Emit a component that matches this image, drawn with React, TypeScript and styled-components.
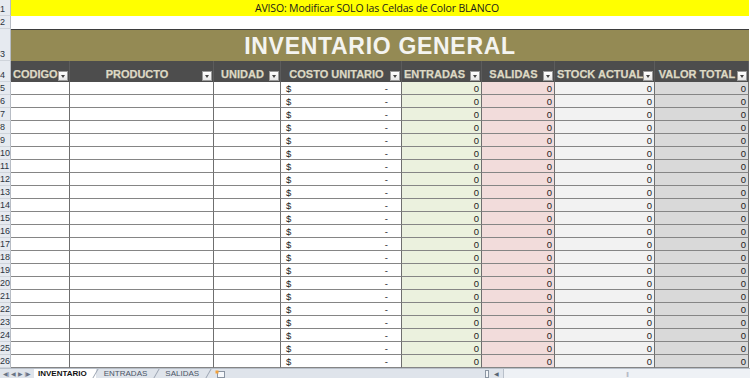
import React from 'react';
import styled, { createGlobalStyle } from 'styled-components';

const GlobalStyle = createGlobalStyle`
  html, body {
    margin: 0;
    padding: 0;
    background: #ffffff;
    overflow: hidden;
  }
  * {
    box-sizing: border-box;
  }
`;

const Page = styled.div`
  width: 750px;
  height: 378px;
  display: flex;
  flex-direction: column;
  font-family: 'Liberation Sans', Arial, sans-serif;
  background: #ffffff;
  overflow: hidden;
`;

const Sheet = styled.div`
  display: grid;
  grid-template-columns: 11px 59px 144px 67px 121px 80px 73px 100px 94px;
  grid-template-rows: 16px 13px 32px 21px repeat(22, 13px);
  flex: none;
`;

const RowNum = styled.div`
  background: #e6eaf0;
  border-right: 1px solid #b7bcc4;
  border-bottom: 1px solid #cfd4db;
  color: #2c3440;
  font-size: 9px;
  line-height: 1;
  display: flex;
  align-items: flex-end;
  justify-content: flex-end;
  padding: 0 1px 1px 0;
  overflow: hidden;
  white-space: nowrap;
  direction: rtl;
`;

const Notice = styled.div`
  grid-column: 2 / -1;
  background: #ffff00;
  color: #1a1a1a;
  font-family: 'Open Sans', 'Liberation Sans', sans-serif;
  font-size: 10.5px;
  display: flex;
  align-items: center;
  justify-content: center;
  letter-spacing: -0.15px;
  padding-right: 6px;
`;

const Blank = styled.div`
  grid-column: 2 / -1;
  background: #ffffff;
`;

const TitleBand = styled.div`
  grid-column: 2 / -1;
  background: #948a54;
  border-top: 1px solid #3d3d3d;
  color: #f4f4f0;
  font-family: 'Liberation Sans', Arial, sans-serif;
  font-weight: 700;
  font-size: 23px;
  letter-spacing: 0.7px;
  display: flex;
  align-items: center;
  justify-content: center;
  padding: 2px 0 0 0;
`;

const HeadCell = styled.div`
  background: #4d4d4d;
  color: #ddd9c4;
  font-weight: 700;
  font-size: 11px;
  display: flex;
  align-items: flex-end;
  padding: 0 1px 1px 2px;
  border-right: 1px solid #5c5c5c;
  white-space: nowrap;
  -webkit-text-stroke: 0.25px #ddd9c4;
`;

const HeadLabel = styled.span<{ $align: 'left' | 'center' }>`
  flex: 1;
  text-align: ${p => p.$align};
  padding-bottom: 1px;
  overflow: visible;
`;

const FilterButton = styled.span`
  flex: none;
  width: 10px;
  height: 10px;
  background: linear-gradient(#ffffff, #e6e6e6);
  border: 1px solid #9a9a9a;
  display: flex;
  align-items: center;
  justify-content: center;

  &::after {
    content: '';
    border-left: 2.5px solid transparent;
    border-right: 2.5px solid transparent;
    border-top: 3px solid #444;
    margin-top: 1px;
  }
`;

type Tone = 'white' | 'green' | 'pink' | 'light' | 'gray';

const toneColors: Record<Tone, string> = {
  white: '#ffffff',
  green: '#ebf1de',
  pink: '#f2dcdb',
  light: '#f2f2f2',
  gray: '#d9d9d9',
};

const Cell = styled.div<{ $tone: Tone }>`
  background: ${p => toneColors[p.$tone]};
  border-right: 1px solid #6f6f6f;
  border-bottom: 1px solid #858585;
  font-size: 9.5px;
  color: #222;
  display: flex;
  align-items: flex-end;
  justify-content: flex-end;
  padding: 0 2px 1px 3px;
  line-height: 1;
`;

const MoneyCell = styled(Cell)`
  justify-content: space-between;
  padding: 0 13px 1px 5px;
`;

const TabBar = styled.div`
  flex: 1;
  display: flex;
  align-items: stretch;
  background: #dfe4eb;
  border-top: 1px solid #b9c0ca;
  font-size: 8px;
  color: #3a4656;
  overflow: hidden;
`;

const TabStrip = styled.div`
  width: 485px;
  display: flex;
  align-items: stretch;
`;

const NavArrows = styled.div`
  width: 34px;
  display: flex;
  align-items: center;
  justify-content: space-around;
  padding: 0 2px;
  color: #6a7484;
  font-size: 6px;
`;

const Tab = styled.div<{ $active?: boolean }>`
  position: relative;
  display: flex;
  align-items: center;
  padding: ${p => (p.$active ? '0 9px 0 4px' : '0 10px 0 8px')};
  background: ${p => (p.$active ? '#ffffff' : 'transparent')};
  font-weight: ${p => (p.$active ? 700 : 400)};
  color: ${p => (p.$active ? '#111' : '#4a5566')};
  font-size: 8px;

  &::after {
    content: '';
    position: absolute;
    right: 0;
    top: 0;
    bottom: 0;
    border-right: 1px solid #9aa3b0;
    transform: skewX(-30deg);
  }
`;

const InsertTab = styled.div`
  display: flex;
  align-items: center;
  padding: 0 6px;
`;

const ScrollArea = styled.div`
  flex: 1;
  display: flex;
  align-items: center;
  gap: 3px;
  padding-left: 0;
`;

const Splitter = styled.span`
  width: 4px;
  height: 8px;
  border: 1px solid #8c96a3;
  background: #f4f6f9;
`;

const ScrollArrow = styled.span`
  font-size: 6px;
  color: #5a6472;
  width: 8px;
  text-align: center;
`;

const Track = styled.div`
  flex: 1;
  height: 10px;
  background: #eef1f5;
  border-left: 1px solid #b9c0ca;
  display: flex;
  align-items: center;
  justify-content: center;
  color: #a0a8b4;
  font-size: 6px;
  letter-spacing: -1px;
`;

const headers: { label: string; align: 'left' | 'center' }[] = [
  { label: 'CODIGO', align: 'left' },
  { label: 'PRODUCTO', align: 'center' },
  { label: 'UNIDAD', align: 'center' },
  { label: 'COSTO UNITARIO', align: 'center' },
  { label: 'ENTRADAS', align: 'left' },
  { label: 'SALIDAS', align: 'center' },
  { label: 'STOCK ACTUAL', align: 'left' },
  { label: 'VALOR TOTAL', align: 'center' },
];

const dataRows = Array.from({ length: 22 }, (_, i) => i + 5);

const App: React.FC = () => {
  return (
    <Page>
      <GlobalStyle />
      <Sheet>
        <RowNum>1</RowNum>
        <Notice>AVISO: Modificar SOLO las Celdas de Color BLANCO</Notice>

        <RowNum>2</RowNum>
        <Blank />

        <RowNum>3</RowNum>
        <TitleBand>INVENTARIO GENERAL</TitleBand>

        <RowNum>4</RowNum>
        {headers.map(h => (
          <HeadCell key={h.label}>
            <HeadLabel $align={h.align}>{h.label}</HeadLabel>
            <FilterButton />
          </HeadCell>
        ))}

        {dataRows.map(n => (
          <React.Fragment key={n}>
            <RowNum>{n}</RowNum>
            <Cell $tone="white" />
            <Cell $tone="white" />
            <Cell $tone="white" />
            <MoneyCell $tone="white">
              <span>$</span>
              <span>-</span>
            </MoneyCell>
            <Cell $tone="green">0</Cell>
            <Cell $tone="pink">0</Cell>
            <Cell $tone="light">0</Cell>
            <Cell $tone="gray">0</Cell>
          </React.Fragment>
        ))}
      </Sheet>

      <TabBar>
        <TabStrip>
          <NavArrows>
            <span>◀|</span>
            <span>◀</span>
            <span>▶</span>
            <span>|▶</span>
          </NavArrows>
          <Tab $active>INVENTARIO</Tab>
          <Tab>ENTRADAS</Tab>
          <Tab>SALIDAS</Tab>
          <InsertTab>
            <svg width="12" height="8" viewBox="0 0 12 8">
              <rect x="2.5" y="1.5" width="7" height="6" fill="#f6f8fb" stroke="#8a94a2" />
              <rect x="0.5" y="0.5" width="3" height="3" fill="#f2a03a" />
            </svg>
          </InsertTab>
        </TabStrip>
        <ScrollArea>
          <Splitter />
          <ScrollArrow>◀</ScrollArrow>
          <Track>|||</Track>
        </ScrollArea>
      </TabBar>
    </Page>
  );
};

export default App;
